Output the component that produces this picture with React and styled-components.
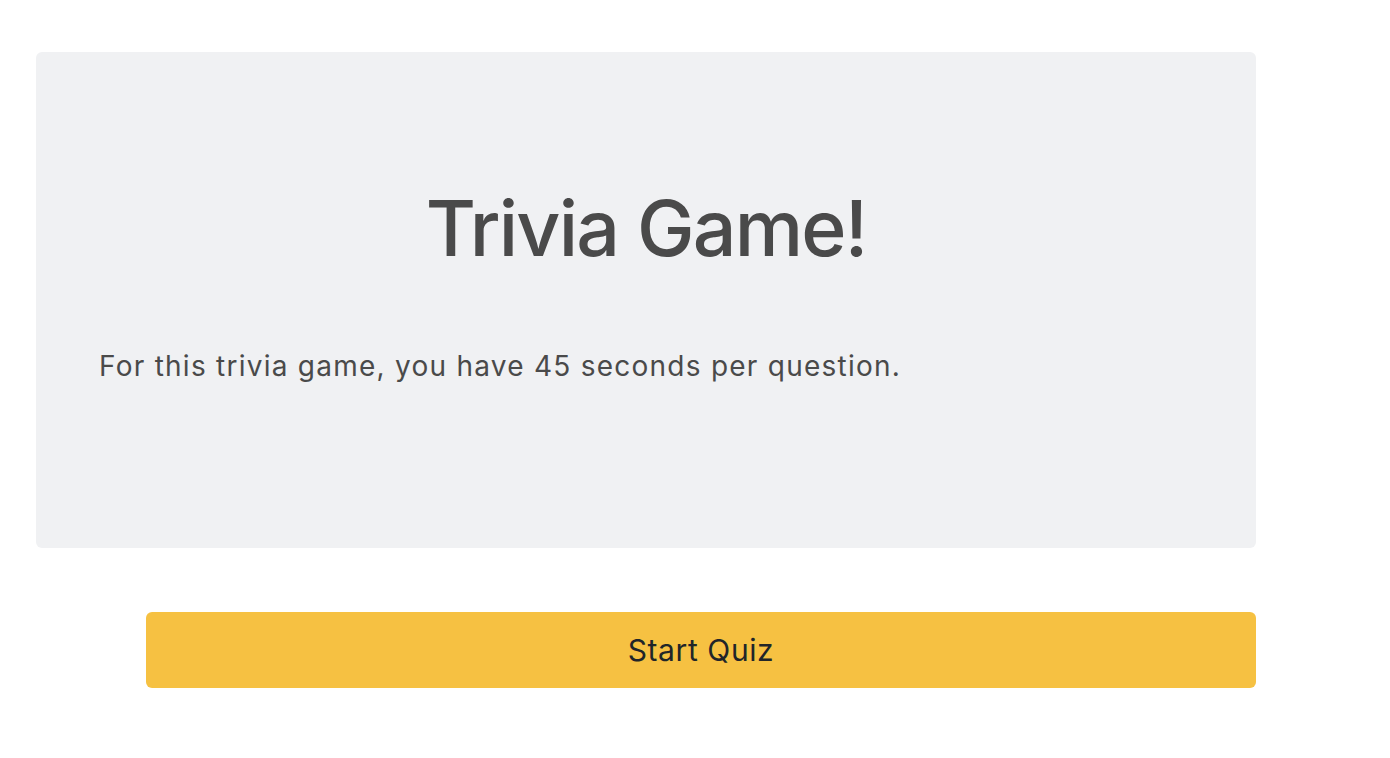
import React from 'react';
import styled, { createGlobalStyle } from 'styled-components';

const GlobalStyle = createGlobalStyle`
  html, body {
    margin: 0;
    padding: 0;
    background: #ffffff;
    font-family: Inter, "Noto Sans", "Liberation Sans", sans-serif;
  }
`;

const Page = styled.div`
  width: 1220px;
  padding: 52px 0 0 36px;
`;

const Jumbotron = styled.section`
  height: 496px;
  box-sizing: border-box;
  padding: 128px 63px 0;
  background: #f0f1f3;
  border-radius: 6px;
  display: flex;
  flex-direction: column;
`;

const Title = styled.h1`
  margin: 0;
  font-size: 77px;
  line-height: 96px;
  font-weight: 500;
  color: #4a4a4a;
  text-align: center;
  letter-spacing: -1.8px;
`;

const Lead = styled.p`
  margin: 69px 0 0;
  font-size: 28px;
  line-height: 42px;
  font-weight: 400;
  color: #4a4a4a;
  letter-spacing: 1.25px;
`;

const StartButton = styled.button`
  display: block;
  margin: 64px 0 0 110px;
  width: 1110px;
  height: 76px;
  border: none;
  border-radius: 6px;
  background: #f6c142;
  color: #212529;
  font-family: inherit;
  font-size: 30px;
  font-weight: 400;
  letter-spacing: 0.6px;
  cursor: pointer;
`;

export default function App() {
  return (
    <>
      <GlobalStyle />
      <Page>
        <Jumbotron>
          <Title>Trivia Game!</Title>
          <Lead>For this trivia game, you have 45 seconds per question.</Lead>
        </Jumbotron>
        <StartButton>Start Quiz</StartButton>
      </Page>
    </>
  );
}
